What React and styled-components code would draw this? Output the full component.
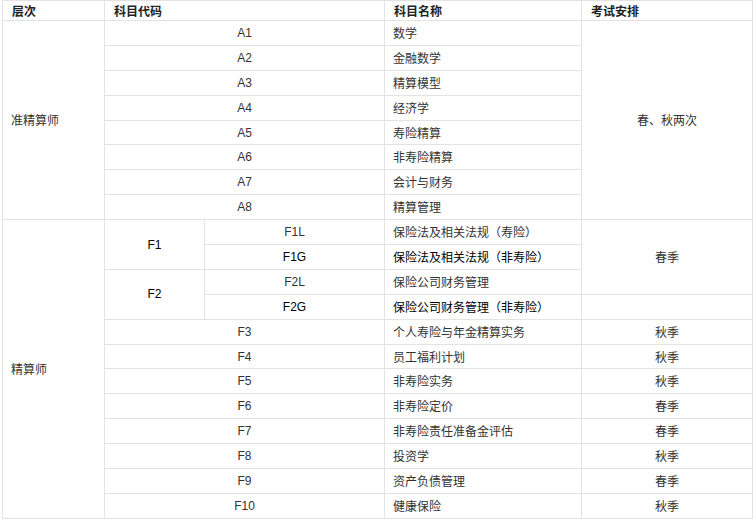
import React from "react";
import styled, { createGlobalStyle } from "styled-components";

const Global = createGlobalStyle`
  html, body { margin: 0; padding: 0; background: #fff; }
  body { font-family: "Liberation Sans", "Noto Sans CJK SC", Arial, sans-serif; }
`;

const Page = styled.div`
  padding: 0 0 0 2px;
`;

const Table = styled.table`
  border-collapse: collapse;
  table-layout: fixed;
  width: 750px;
  font-size: 12px;
  color: #333;
`;

const Col = styled.col`
  width: ${(p) => p.$w}px;
`;

const HeadRow = styled.tr`
  height: 20px;
`;

const Row = styled.tr`
  height: 24.9px;
`;

const Th = styled.th`
  border: 1px solid #e3e3e3;
  padding: 0 9px;
  text-align: left;
  font-weight: bold;
  font-size: 12px;
  color: #222;
  font-family: "Noto Sans CJK SC", sans-serif;
  line-height: 16px;
  vertical-align: middle;
`;

const Td = styled.td`
  border: 1px solid #e3e3e3;
  padding: 0 8px;
  text-align: ${(p) => (p.$center ? "center" : "left")};
  vertical-align: middle;
  line-height: 16px;
  white-space: nowrap;
  color: ${(p) => (p.$dark ? "#000" : "#333")};
  font-family: ${(p) =>
    p.$latin
      ? '"Liberation Sans", Arial, sans-serif'
      : '"Noto Sans CJK SC", sans-serif'};
`;

const aRows = [
  ["A1", "数学"],
  ["A2", "金融数学"],
  ["A3", "精算模型"],
  ["A4", "经济学"],
  ["A5", "寿险精算"],
  ["A6", "非寿险精算"],
  ["A7", "会计与财务"],
  ["A8", "精算管理"],
];

const fRows = [
  ["F3", "个人寿险与年金精算实务", "秋季"],
  ["F4", "员工福利计划", "秋季"],
  ["F5", "非寿险实务", "秋季"],
  ["F6", "非寿险定价", "春季"],
  ["F7", "非寿险责任准备金评估", "春季"],
  ["F8", "投资学", "秋季"],
  ["F9", "资产负债管理", "春季"],
  ["F10", "健康保险", "秋季"],
];

export default function App() {
  return (
    <Page>
      <Global />
      <Table>
        <colgroup>
          <Col $w={102} />
          <Col $w={100} />
          <Col $w={180} />
          <Col $w={197} />
          <Col $w={171} />
        </colgroup>
        <thead>
          <HeadRow>
            <Th>层次</Th>
            <Th colSpan={2}>科目代码</Th>
            <Th>科目名称</Th>
            <Th>考试安排</Th>
          </HeadRow>
        </thead>
        <tbody>
          {aRows.map(([code, name], i) => (
            <Row key={code}>
              {i === 0 && <Td rowSpan={8}>准精算师</Td>}
              <Td colSpan={2} $center $latin>
                {code}
              </Td>
              <Td>{name}</Td>
              {i === 0 && (
                <Td rowSpan={8} $center>
                  春、秋两次
                </Td>
              )}
            </Row>
          ))}
          <Row>
            <Td rowSpan={12}>精算师</Td>
            <Td rowSpan={2} $center $latin $dark>
              F1
            </Td>
            <Td $center $latin>
              F1L
            </Td>
            <Td>保险法及相关法规（寿险）</Td>
            <Td rowSpan={3} $center>
              春季
            </Td>
          </Row>
          <Row>
            <Td $center $latin $dark>
              F1G
            </Td>
            <Td $dark>保险法及相关法规（非寿险）</Td>
          </Row>
          <Row>
            <Td rowSpan={2} $center $latin $dark>
              F2
            </Td>
            <Td $center $latin>
              F2L
            </Td>
            <Td>保险公司财务管理</Td>
          </Row>
          <Row>
            <Td $center $latin $dark>
              F2G
            </Td>
            <Td $dark>保险公司财务管理（非寿险）</Td>
            <Td />
          </Row>
          {fRows.map(([code, name, season]) => (
            <Row key={code}>
              <Td colSpan={2} $center $latin>
                {code}
              </Td>
              <Td>{name}</Td>
              <Td $center>{season}</Td>
            </Row>
          ))}
        </tbody>
      </Table>
    </Page>
  );
}
